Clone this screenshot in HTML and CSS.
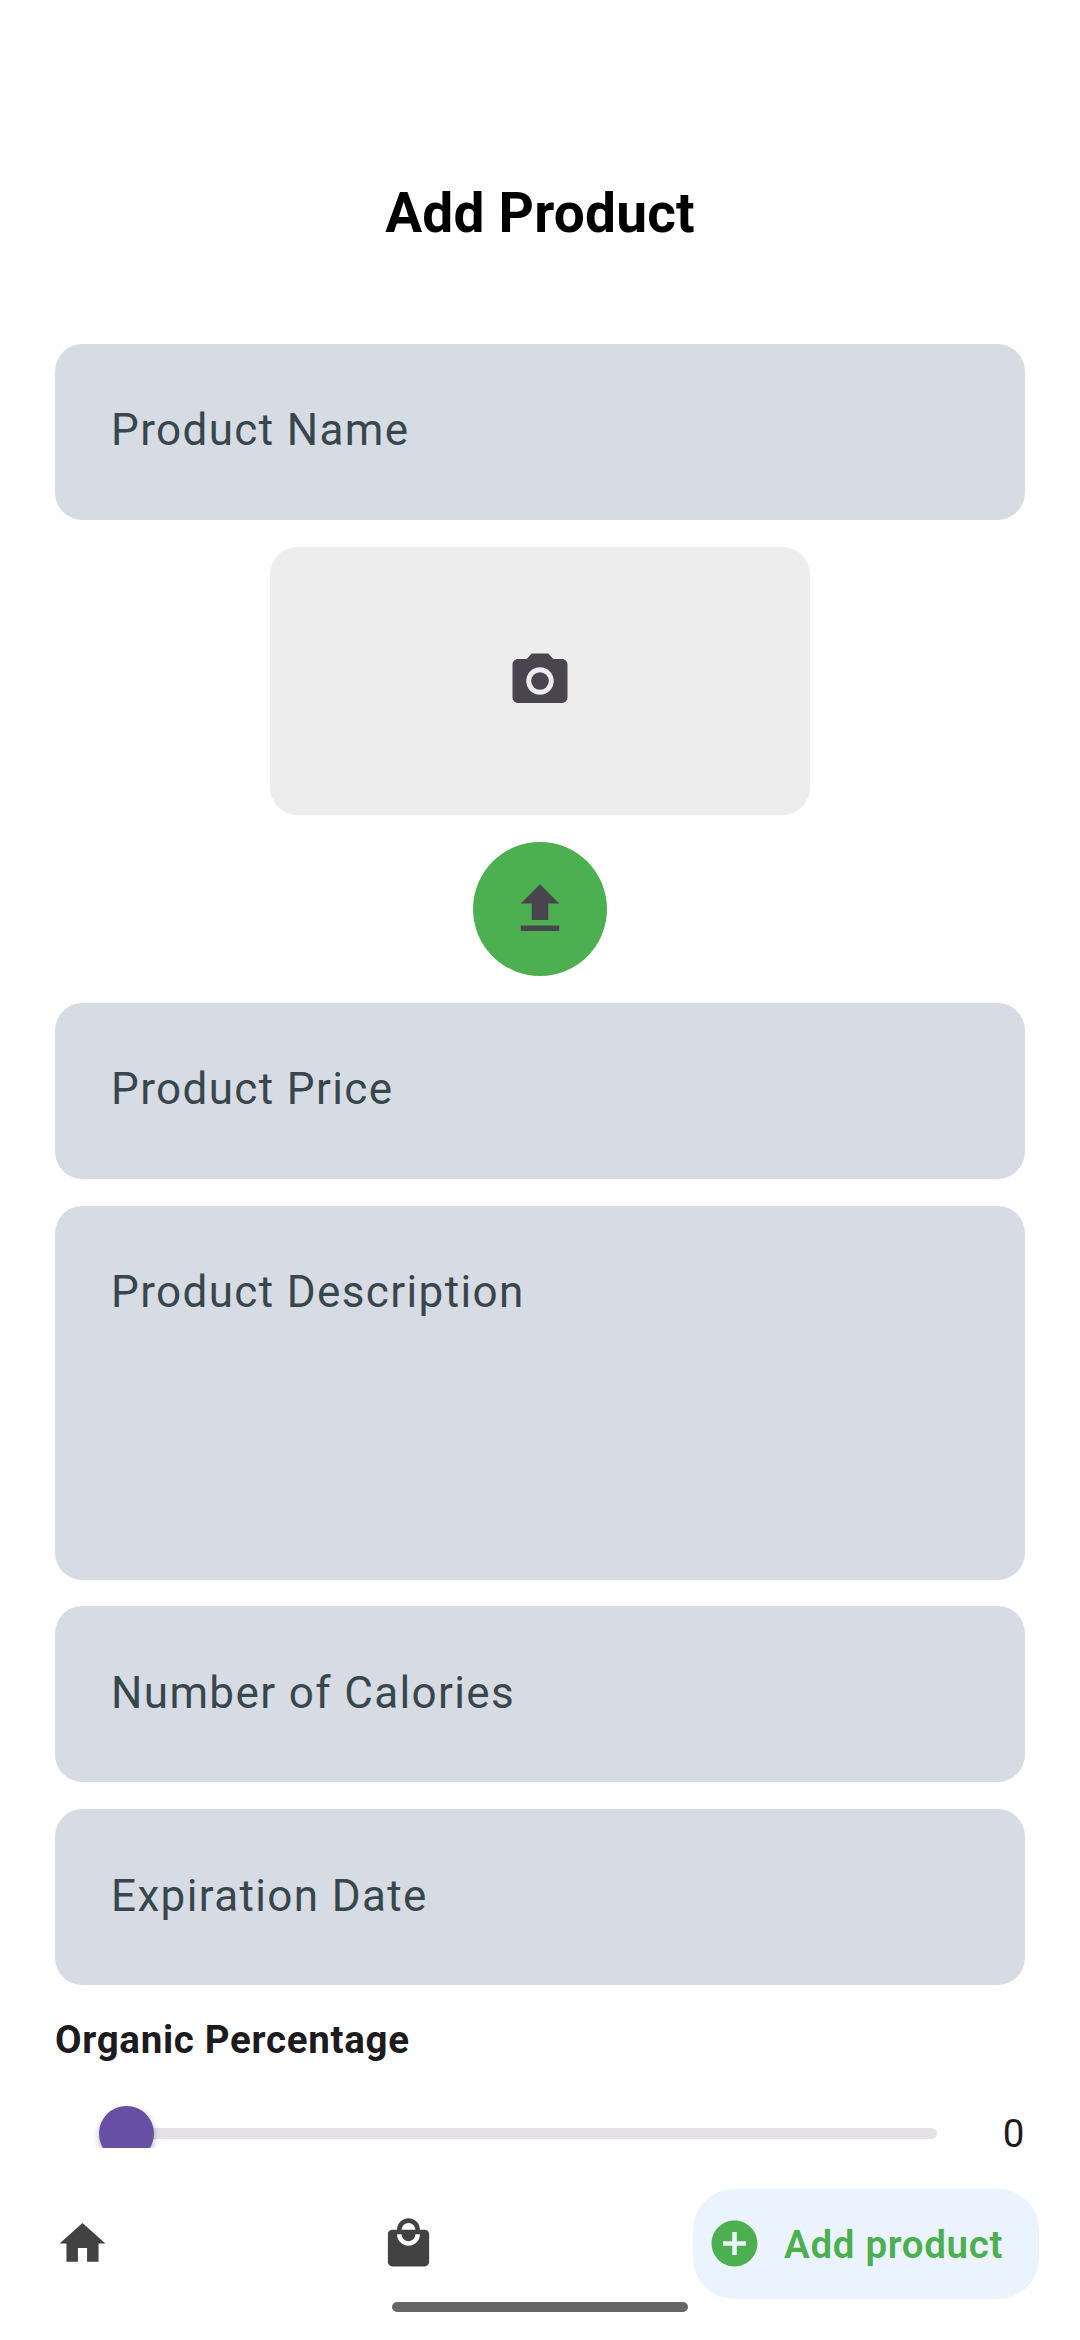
FILE: index.html
```html
<!DOCTYPE html>
<html lang="en">
<head>
<meta charset="utf-8">
<title>Add Product</title>
<link rel="stylesheet" href="styles.css">
</head>
<body>
<main class="screen">
  <h1 class="title">Add Product</h1>
  <div class="form">
    <div class="field">Product Name</div>
    <div class="photo">
      <svg class="icon-large" viewBox="0 0 24 24"><circle cx="12" cy="12" r="3.2"/><path d="M9 2L7.17 4H4c-1.1 0-2 .9-2 2v12c0 1.1.9 2 2 2h16c1.1 0 2-.9 2-2V6c0-1.1-.9-2-2-2h-3.17L15 2H9zm3 15c-2.76 0-5-2.24-5-5s2.24-5 5-5 5 2.24 5 5-2.24 5-5 5z"/></svg>
    </div>
    <div class="upload">
      <svg class="icon-large" viewBox="0 0 24 24"><path d="M9 16h6v-6h4l-7-7-7 7h4zm-4 2h14v2H5z"/></svg>
    </div>
    <div class="field">Product Price</div>
    <div class="field field-tall">Product Description</div>
    <div class="field field-low">Number of Calories</div>
    <div class="field field-low">Expiration Date</div>
  </div>
  <section class="organic">
    <h2 class="organic-title">Organic Percentage</h2>
    <div class="slider-row">
      <div class="slider"><div class="track"></div><div class="thumb"></div></div>
      <span class="value">0</span>
    </div>
  </section>
  <nav class="nav">
    <svg class="icon" viewBox="0 0 24 24"><path d="M10 20v-6h4v6h5v-8h3L12 3 2 12h3v8z"/></svg>
    <svg class="icon icon-bag" viewBox="0 0 24 24"><path d="M19 6h-2c0-2.760-2.240-5-5-5S7 3.240 7 6H5c-1.100 0-1.990.9-1.990 2L3 20c0 1.100.9 2 2 2h14c1.100 0 2-.9 2-2V8c0-1.100-.9-2-2-2zm-7-3c1.660 0 3 1.340 3 3H9c0-1.660 1.340-3 3-3zm0 10c-2.760 0-5-2.240-5-5h2c0 1.660 1.340 3 3 3s3-1.340 3-3h2c0 2.760-2.240 5-5 5z"/></svg>
    <div class="tab">
      <svg class="icon" viewBox="0 0 24 24"><path d="M12 2C6.480 2 2 6.480 2 12s4.480 10 10 10 10-4.480 10-10S17.520 2 12 2zm5 11h-4v4h-2v-4H7v-2h4V7h2v4h4v2z"/></svg>
      <span class="tab-label">Add product</span>
    </div>
  </nav>
  <div class="handle"></div>
</main>
</body>
</html>
```

FILE: styles.css
```css
* {
  box-sizing: border-box;
}

body {
  margin: 0;
  background: #fff;
  font-family: Roboto, "Noto Sans", sans-serif;
}

.screen {
  display: flex;
  flex-direction: column;
  width: 1080px;
  height: 2340px;
  overflow: hidden;
}

.title {
  margin: 0;
  height: 344px;
  padding-top: 180px;
  font-size: 55px;
  line-height: 66px;
  font-weight: 700;
  letter-spacing: 0.2px;
  text-align: center;
  color: #000;
}

.form {
  display: flex;
  flex-direction: column;
  align-items: center;
  gap: 27px;
  padding: 0 55px;
}

.field {
  width: 100%;
  height: 176px;
  padding: 60px 55px 0 56px;
  border-radius: 27.5px;
  background: #d7dbe3;
  color: #37474b;
  font-size: 44px;
  line-height: 52px;
  letter-spacing: 1.375px;
}

.field-tall {
  height: 374px;
  margin-bottom: -1px;
}

.field-low {
  padding-top: 61px;
}

.photo,
.upload {
  display: flex;
  align-items: center;
  justify-content: center;
  color: #49454f;
}

.photo {
  width: 540px;
  height: 268px;
  border-radius: 27.5px;
  background: #ededed;
}

.upload {
  width: 134px;
  height: 134px;
  border-radius: 50%;
  background: #4caf50;
}

.icon-large {
  width: 66px;
  height: 66px;
  fill: currentColor;
}

.organic {
  height: 163px;
  padding: 32px 55px 0;
  color: #1d1b20;
}

.organic-title {
  margin: 0;
  font-size: 38.5px;
  line-height: 46px;
  font-weight: 700;
  letter-spacing: 0.69px;
}

.slider-row {
  display: flex;
  align-items: center;
  justify-content: space-between;
  height: 55px;
  margin-top: 43px;
  padding-left: 44px;
}

.slider {
  display: grid;
  align-items: center;
  width: 838px;
  clip-path: inset(-10px -10px 13px -10px);
}

.track,
.thumb {
  grid-area: 1 / 1;
}

.track {
  height: 11px;
  border-radius: 5.5px;
  background: #e6e0e7;
}

.thumb {
  width: 55px;
  height: 55px;
  border-radius: 50%;
  background: #6750a4;
  box-shadow: 0 3px 6px rgba(0, 0, 0, 0.3);
}

.value {
  font-size: 38.5px;
  line-height: 46px;
  letter-spacing: 0.69px;
}

.nav {
  display: flex;
  align-items: center;
  height: 110px;
  margin-top: 41px;
  padding: 0 41px 0 55px;
  color: #424242;
}

.icon {
  width: 55px;
  height: 55px;
  margin-bottom: 1px;
  fill: currentColor;
}

.icon-bag {
  margin-left: 271px;
}

.tab {
  display: flex;
  align-items: center;
  gap: 22px;
  width: 346px;
  height: 110px;
  margin-left: auto;
  padding-left: 14px;
  border-radius: 41px;
  background: #ebf3ff;
  color: #4caf50;
}

.tab-label {
  padding-top: 2px;
  font-size: 38.5px;
  line-height: 46px;
  font-weight: 600;
  letter-spacing: 0.69px;
  white-space: nowrap;
}

.handle {
  width: 296px;
  height: 10px;
  margin: 3px auto 0;
  border-radius: 5px;
  background: #666;
}
```
